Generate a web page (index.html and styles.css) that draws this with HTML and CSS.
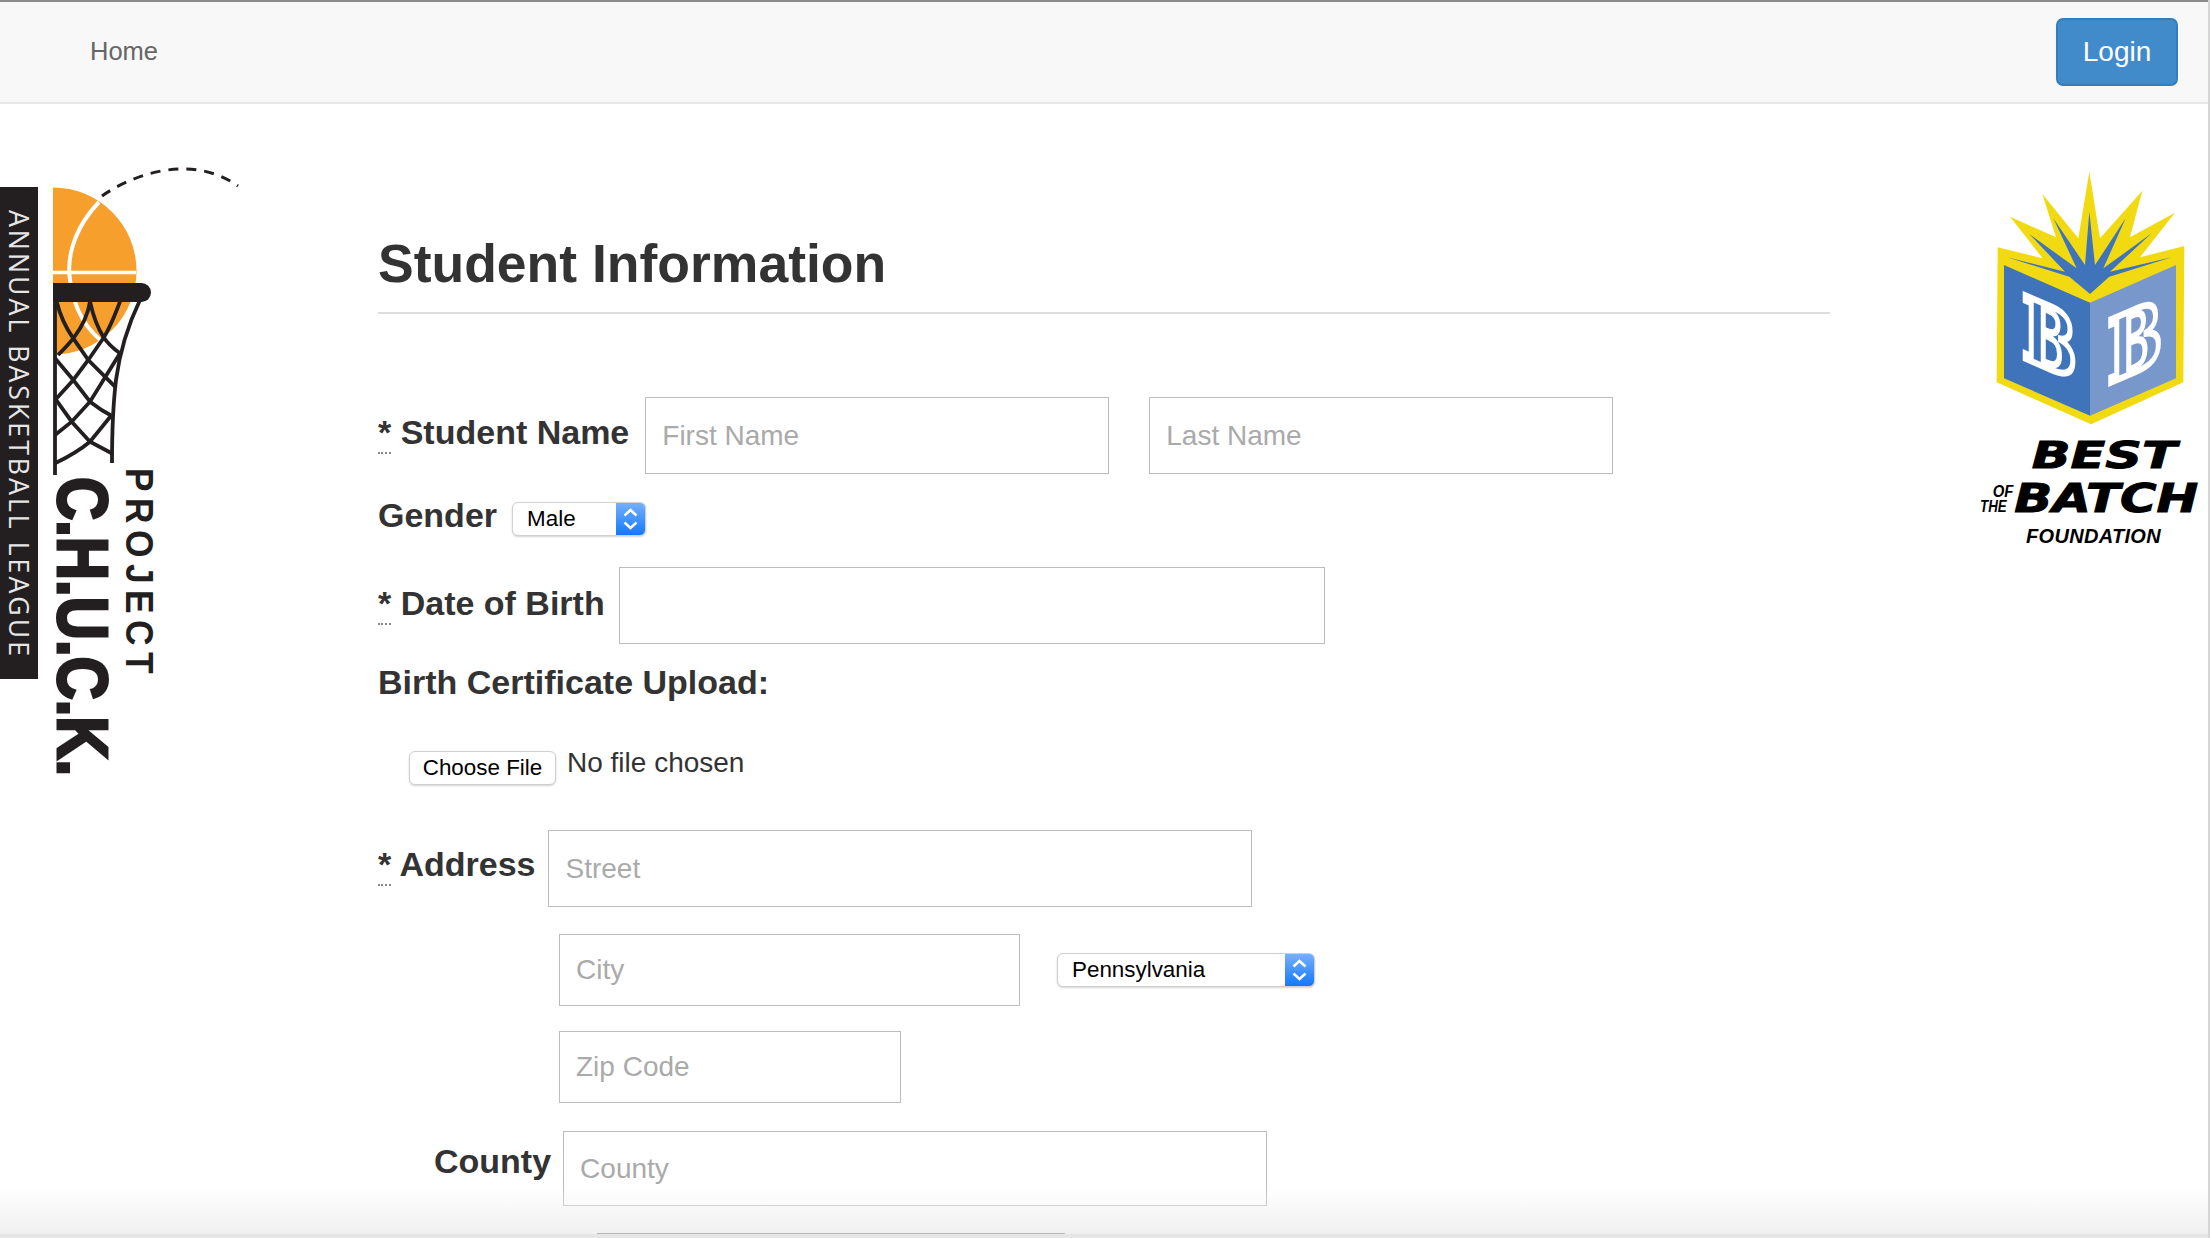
FILE: index.html
```html
<!DOCTYPE html>
<html lang="en">
<head>
<meta charset="utf-8">
<title>Student Information</title>
<link rel="stylesheet" href="styles.css">
</head>
<body>
<div class="page">
  <nav class="navbar">
    <a class="nav-home" href="#">Home</a>
    <button class="btn-login" type="button">Login</button>
  </nav>
  <div class="stage">
    <aside class="logo-left">
      <svg class="chuck" viewBox="0 0 260 660" width="260" height="660" aria-label="Project C.H.U.C.K. logo">
        <rect x="0" y="47" width="38" height="492" fill="#231f20"/>
        <text class="t-annual" transform="translate(9 70) rotate(90)" textLength="449" lengthAdjust="spacingAndGlyphs">ANNUAL BASKETBALL LEAGUE</text>
        <path d="M53 47.500A83.500 83.500 0 0 1 53 214.500Z" fill="#f69f2d"/>
        <path d="M53 132.500H136" stroke="#fff" stroke-width="3.500" fill="none"/>
        <path d="M99 62C78 84 66 112 70 140C74 170 88 192 107 205" stroke="#fff" stroke-width="4" fill="none"/>
        <path d="M102 56C130 36 190 12 238 46" stroke="#231f20" stroke-width="3" stroke-dasharray="10 8" fill="none"/>
        <g class="net">
          <path d="M55 145V335"/>
          <path d="M140 160C128 185 120 210 116 240C113 265 112 295 112 323"/>
          <path d="M56.700 161.700C60 175 66 188 73.300 198.300L88.300 220L115 246.700"/>
          <path d="M90 161.700C93 175 97 187 103.300 196.700C108 204 114 209 120 213.300"/>
          <path d="M55 218.300L73.300 240L90 261.700C98 268 106 273 113.300 276.700"/>
          <path d="M55 258.300L71.700 281.700L90 301.700L111.700 313.300"/>
          <path d="M90 161.700C88 175 82 187 73.300 198.300C68 205 63 210 58 215"/>
          <path d="M120 161.700C115 175 110 188 103.300 198.300L88.300 220L73.300 240L56.700 258.300"/>
          <path d="M120 213.300L90 261.700L71.700 281.700L55 295"/>
          <path d="M111.700 275L90 301.700C80 310 68 317 55 323.300"/>
        </g>
        <rect x="53" y="143" width="98" height="19" rx="9.500" fill="#231f20"/>
        <rect x="53" y="143" width="40" height="19" fill="#231f20"/>
        <text class="t-project" transform="translate(126 328) rotate(90)" textLength="212" lengthAdjust="spacingAndGlyphs">PROJECT</text>
        <text class="t-chuck" transform="translate(58 337) rotate(90) scale(.855 1)">C.H.U.C.K.</text>
      </svg>
    </aside>

    <main class="content">
      <h2 class="title">Student Information</h2>
      <form class="form">
        <div class="row row-name">
          <label class="lbl"><abbr class="req" title="required">*</abbr> Student Name</label>
          <input class="field w464" type="text" placeholder="First Name">
          <input class="field w464 second" type="text" placeholder="Last Name">
        </div>
        <div class="row row-gender">
          <label class="lbl">Gender</label>
          <select class="sel sel-gender"><option>Male</option></select>
        </div>
        <div class="row row-dob">
          <label class="lbl"><abbr class="req" title="required">*</abbr> Date of Birth</label>
          <input class="field w706" type="text">
        </div>
        <div class="lbl heading-upload">Birth Certificate Upload:</div>
        <div class="row row-file">
          <button class="file-btn" type="button">Choose File</button>
          <span class="file-none">No file chosen</span>
        </div>
        <div class="row row-address">
          <label class="lbl"><abbr class="req" title="required">*</abbr> Address</label>
          <input class="field w704" type="text" placeholder="Street">
        </div>
        <div class="row row-city">
          <input class="field short w461" type="text" placeholder="City">
          <select class="sel sel-state"><option>Pennsylvania</option></select>
        </div>
        <div class="row row-zip">
          <input class="field short w342" type="text" placeholder="Zip Code">
        </div>
        <div class="row row-county">
          <label class="lbl">County</label>
          <input class="field w704 county" type="text" placeholder="County">
        </div>
      </form>
    </main>

    <aside class="logo-right">
      <svg class="bob" viewBox="0 0 780 1260" width="260" height="420" aria-label="Best of the Batch Foundation logo">
        <polygon fill="#f2da12" points="143,292 278,325 180,200 318,262 277,132 385,265 418,65 450,265 577,122 540,262 675,188 570,322 703,288 700,697 423,823 140,697"/>
        <polygon fill="#3f74bb" points="162,345 420,458 420,797 162,685"/>
        <polygon fill="#7897cb" points="420,458 678,345 678,685 420,797"/>
        <polygon fill="#3f74bb" points="420,432 358,380 172,322 345,365 238,252 380,355 310,205 405,345 418,185 435,345 527,205 460,355 605,250 480,365 665,322 478,380"/>
        <text class="t-b left-b" transform="matrix(.74 .32 0 1 217 622)">B</text>
        <text class="t-b right-b" transform="matrix(.74 -.32 0 1 473 702)">B</text>
        <text class="t-best" x="245" y="955" textLength="435" lengthAdjust="spacingAndGlyphs">BEST</text>
        <text class="t-of" x="128" y="1040" textLength="62" lengthAdjust="spacingAndGlyphs">OF</text>
        <text class="t-of" x="90" y="1086" textLength="80" lengthAdjust="spacingAndGlyphs">THE</text>
        <text class="t-batch" x="193" y="1085" textLength="552" lengthAdjust="spacingAndGlyphs">BATCH</text>
        <text class="t-found" x="228" y="1180" textLength="404" lengthAdjust="spacing">FOUNDATION</text>
      </svg>
    </aside>
  </div>
  <div class="fold-shade"></div>
  <div class="fold-line"></div>
</div>
</body>
</html>
```
FILE: styles.css
```css
* { box-sizing: border-box; }
html, body { margin: 0; padding: 0; background: #fff; }
body { font-family: "Liberation Sans", Arial, sans-serif; color: #333; }

.page {
  position: relative;
  width: 2210px;
  height: 1238px;
  overflow: hidden;
  border-right: 2px solid #d6d6d6;
}

.navbar {
  display: flex;
  align-items: flex-start;
  justify-content: space-between;
  height: 104px;
  padding: 16px 30px 0 90px;
  background: #f8f8f8;
  border-top: 2px solid #8c8c8c;
  border-bottom: 2px solid #e7e7e7;
}
.nav-home {
  margin-top: 17px;
  font-size: 25.500px;
  line-height: 32px;
  color: #666;
  text-decoration: none;
}
.btn-login {
  width: 122px;
  height: 68px;
  padding: 0;
  font-family: inherit;
  font-size: 28px;
  color: #fff;
  background: #428bca;
  border: 2px solid #357ebd;
  border-radius: 7px;
}

.stage {
  display: grid;
  grid-template-columns: 378px 1452px 1fr;
}

.chuck { display: block; margin-top: 36px; }
.logo-right { display: flex; justify-content: flex-end; margin-right: -2px; }
.bob { display: block; margin-top: 46px; flex: none; }

.title {
  margin: 0;
  padding: 130px 0 18px;
  font-size: 53.500px;
  line-height: 60px;
  font-weight: 700;
  color: #333;
  border-bottom: 2px solid #ddd;
}

.form { display: block; }
.row { display: flex; align-items: center; }
.lbl {
  display: block;
  font-size: 34px;
  line-height: 40px;
  font-weight: 700;
  color: #333;
  white-space: nowrap;
}
.row > .lbl { margin-right: 16px; margin-bottom: 5px; }
.row-name > .lbl { margin-bottom: 7px; }
.row-gender > .lbl { margin-bottom: 0; margin-right: 15px; }
.row-dob > .lbl { margin-right: 14px; }
.row-address > .lbl { margin-right: 13px; margin-bottom: 9px; }
.req {
  text-decoration: none;
  border-bottom: 2px dotted #888;
  padding-bottom: 1px;
}

.field {
  display: block;
  height: 77px;
  padding: 0 16px;
  font-family: inherit;
  font-size: 28px;
  color: #333;
  background: #fff;
  border: 1.500px solid #bdbdbd;
  border-radius: 0;
  outline: none;
}
.field::placeholder { color: #aaa; opacity: 1; }
.field.short { height: 72px; }
.field.county { height: 75px; }
.w464 { width: 464px; }
.w706 { width: 706px; }
.w704 { width: 704px; }
.w461 { width: 461px; }
.w342 { width: 342px; }
.second { margin-left: 40px; }

.sel {
  display: block;
  appearance: none;
  -webkit-appearance: none;
  height: 34px;
  padding: 0 36px 0 14px;
  font-family: inherit;
  font-size: 22.400px;
  line-height: 30px;
  color: #000;
  border: 1.500px solid #d0d0d0;
  border-radius: 6px;
  box-shadow: 0 1px 2px rgba(0, 0, 0, .18);
  background-color: #fff;
  background-image:
    url("data:image/svg+xml,%3Csvg xmlns='http://www.w3.org/2000/svg' width='29' height='34'%3E%3Cpath d='M8.500 13.500l6-5.500 6 5.500M8.500 20.500l6 5.500 6-5.500' fill='none' stroke='%23fff' stroke-width='2.400'/%3E%3C/svg%3E"),
    linear-gradient(#74b1fb, #1478fb);
  background-repeat: no-repeat, no-repeat;
  background-position: right center, right center;
  background-size: 29px 34px, 29px 100%;
}
.sel-gender { width: 134px; margin-top: 8px; }
.sel-state { width: 258px; margin-left: 37px; }

.row-name { margin-top: 83px; }
.row-gender { margin-top: 20px; }
.row-dob { margin-top: 31px; }
.heading-upload { margin-top: 18px; }
.row-file { margin-top: 49px; margin-left: 31px; align-items: flex-start; }
.row-address { margin-top: 45px; }
.row-city { margin-top: 27px; margin-left: 181px; }
.row-zip { margin-top: 25px; margin-left: 181px; }
.row-county { margin-top: 28px; margin-left: 56px; }
.row-county .lbl { margin-bottom: 15px; margin-right: 12px; }

.file-btn {
  width: 147px;
  height: 34px;
  padding: 0;
  font-family: inherit;
  font-size: 22.400px;
  color: #000;
  background: #fff;
  border: 1.500px solid #d0d0d0;
  border-radius: 6px;
  box-shadow: 0 1px 2px rgba(0, 0, 0, .18);
}
.file-none {
  margin-left: 11px;
  margin-top: -5px;
  font-size: 28px;
  line-height: 34px;
  color: #333;
}

.net path { fill: none; stroke: #231f20; stroke-width: 3.800; }
.t-annual { font-family: "Open Sans", sans-serif; font-size: 27px; letter-spacing: 3px; fill: #e6e6e6; }
.t-project { font-family: "Liberation Sans", sans-serif; font-weight: 700; font-size: 38px; letter-spacing: 7px; fill: #231f20; }
.t-chuck { font-family: "Liberation Sans", sans-serif; font-weight: 700; font-size: 70px; fill: #231f20; stroke: #231f20; stroke-width: 3px; }
.t-b { font-family: "DejaVu Serif", serif; font-weight: 700; font-size: 260px; stroke: #fff; stroke-width: 20px; }
.left-b { fill: #3f74bb; }
.right-b { fill: #7897cb; }
.t-best, .t-batch {
  font-family: "DejaVu Sans", sans-serif;
  font-weight: 700;
  font-style: italic;
  fill: #000;
  stroke: #000;
  stroke-width: 3px;
}
.t-of, .t-found {
  font-family: "Liberation Sans", sans-serif;
  font-weight: 700;
  font-style: italic;
  fill: #000;
}
.t-best { font-size: 114px; }
.t-batch { font-size: 118px; }
.t-of { font-size: 48px; }
.t-found { font-size: 60px; }

.fold-shade {
  position: absolute;
  left: 0;
  right: 0;
  bottom: 0;
  height: 50px;
  background: linear-gradient(rgba(240, 240, 240, 0), #f0f0f0);
  border-bottom: 4px solid #e6e6e6;
  pointer-events: none;
}
.fold-line {
  position: absolute;
  left: 597px;
  width: 468px;
  bottom: 4px;
  height: 1px;
  background: #b8b8b8;
}
```
